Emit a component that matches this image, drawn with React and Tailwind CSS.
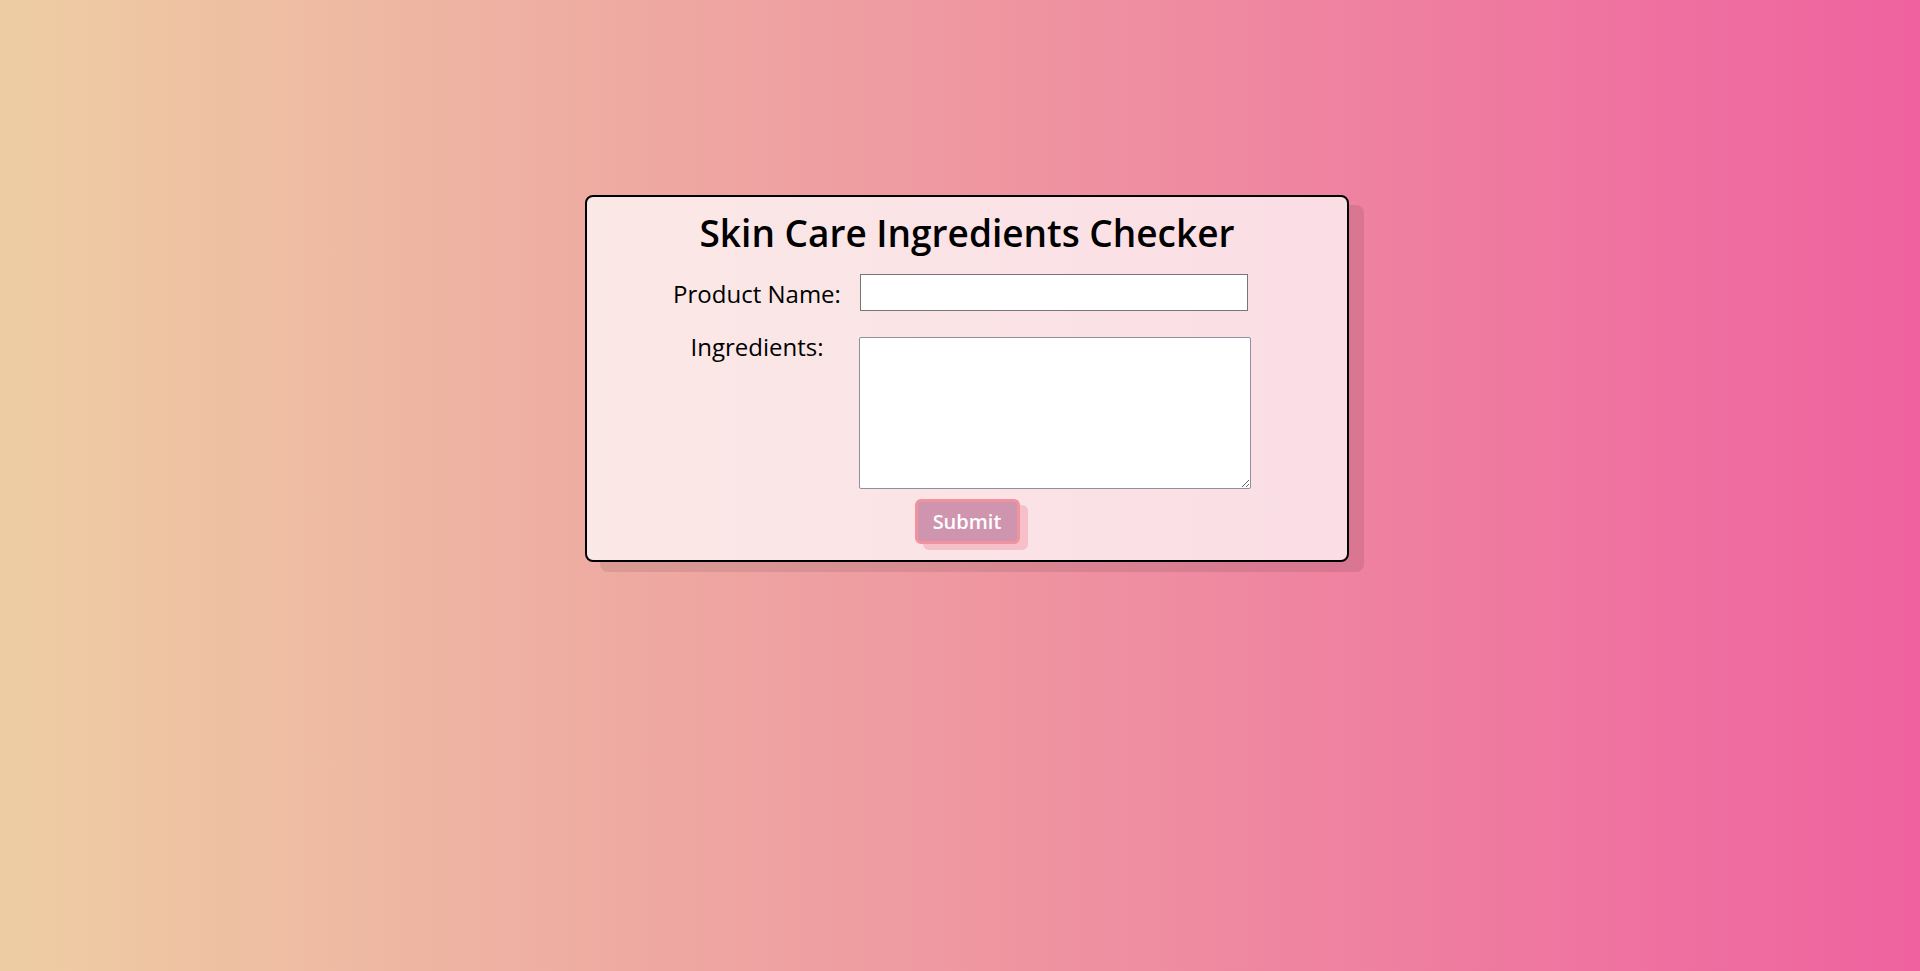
import React from "react";

export default function App() {
  const font = { fontFamily: "'Open Sans', Lato, sans-serif" };
  return (
    <div
      className="min-h-[971px] w-full bg-[linear-gradient(to_right,#eecda3,#ef629f)] pt-[195px]"
      style={font}
    >
      <div className="mx-auto w-[764px] translate-x-[7px] rounded-lg border-2 border-black bg-white/[0.73] shadow-[15px_10px_0_rgba(0,0,0,0.09)]">
        <h1 className="pt-[14px] text-center text-[37px] font-semibold leading-[44px] text-black">
          Skin Care Ingredients Checker
        </h1>
        <form className="mt-[19px] pl-[75px]" onSubmit={(e) => e.preventDefault()}>
          <div className="grid grid-cols-[190px_392px] gap-x-[8px] gap-y-[25px]">
            <label className="flex items-center justify-center pt-[2px] text-[24px] text-black">
              Product Name:
            </label>
            <input
              type="text"
              className="h-[37px] w-[388px] border border-[#767676] bg-white px-1 outline-none"
            />
            <label className="-mt-[4px] text-center text-[24px] leading-[28px] text-black">
              Ingredients:
            </label>
            <textarea className="h-[152px] w-[392px] -ml-px rounded-[2px] border border-[#8f8f9d] bg-white outline-none" />
          </div>
        </form>
        <div className="mt-[10px] flex justify-center pb-[16px]">
          <button
            type="button"
            className="h-[45px] w-[105px] rounded-md border-[3px] border-[#f0939f] bg-[#cf94ae] text-[20px] font-semibold text-white shadow-[8px_6px_0_#f6c0cb]"
          >
            Submit
          </button>
        </div>
      </div>
    </div>
  );
}
